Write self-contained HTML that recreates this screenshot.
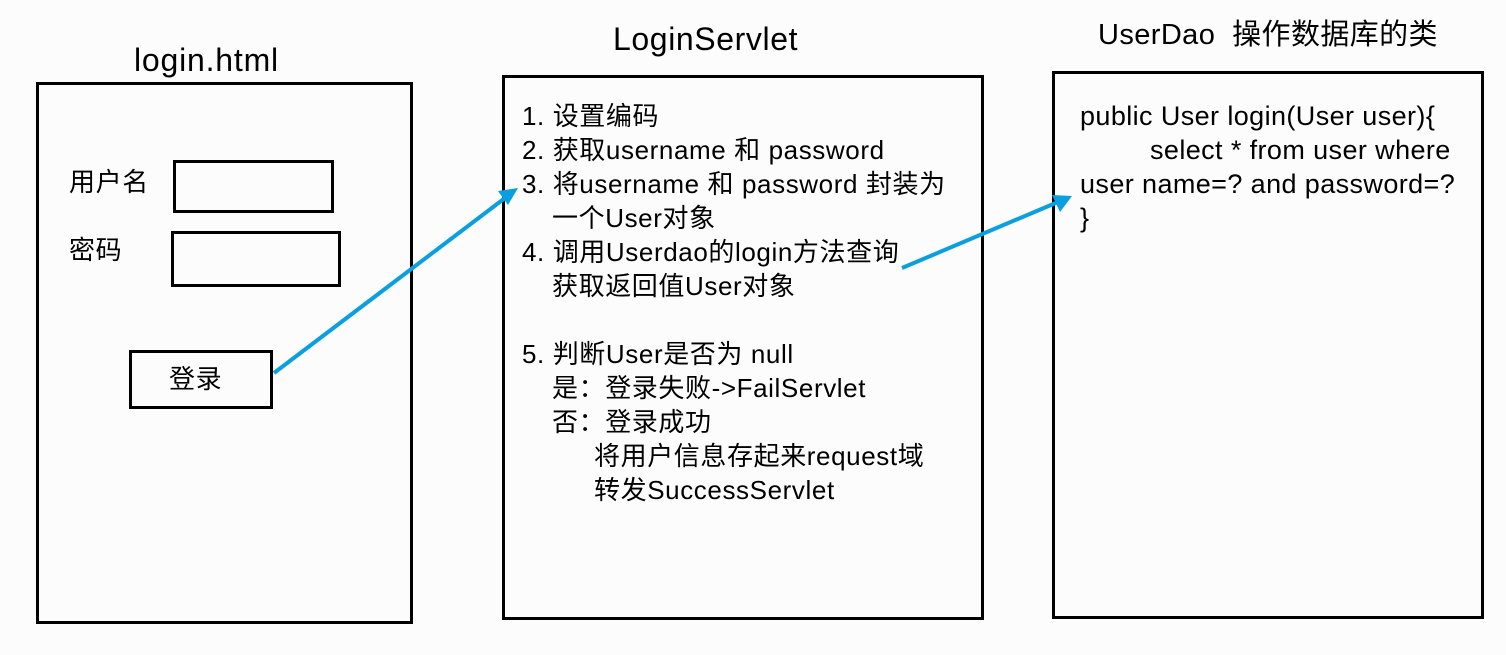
<!DOCTYPE html>
<html><head><meta charset="utf-8"><style>
body{margin:0;width:1506px;height:655px;background:#fcfcfc;position:relative;overflow:hidden;font-family:"Liberation Sans","Noto Sans CJK SC",sans-serif;color:#000}
.b{position:absolute;border:3px solid #000;box-sizing:border-box}
.t{position:absolute;white-space:nowrap;font-size:26px;line-height:34px;letter-spacing:0.6px}
.r{font-size:27px;letter-spacing:0.4px}
</style></head><body>
<div class="t" style="left:134px;top:43px;font-size:32px;letter-spacing:0.8px">login.html</div>
<div class="t" style="left:613px;top:22px;font-size:32px;letter-spacing:0.6px">LoginServlet</div>
<div class="t" style="left:1098px;top:18px;font-size:29px;letter-spacing:0.4px">UserDao&nbsp; 操作数据库的类</div>

<div class="b" style="left:36px;top:82px;width:377px;height:542px"></div>
<div class="b" style="left:502px;top:75px;width:482px;height:545px"></div>
<div class="b" style="left:1052px;top:71px;width:432px;height:548px"></div>

<div class="b" style="left:173px;top:160px;width:161px;height:53px"></div>
<div class="b" style="left:171px;top:231px;width:170px;height:56px"></div>
<div class="b" style="left:129px;top:350px;width:144px;height:59px"></div>
<div class="t" style="left:69px;top:165px">用户名</div>
<div class="t" style="left:69px;top:233px">密码</div>
<div class="t" style="left:169px;top:362px">登录</div>

<div class="t" style="left:522px;top:99px">1. 设置编码</div>
<div class="t" style="left:522px;top:133px">2. 获取username 和 password</div>
<div class="t" style="left:522px;top:167px">3. 将username 和 password 封装为</div>
<div class="t" style="left:552px;top:201px">一个User对象</div>
<div class="t" style="left:522px;top:235px">4. 调用Userdao的login方法查询</div>
<div class="t" style="left:552px;top:269px">获取返回值User对象</div>
<div class="t" style="left:522px;top:337px">5. 判断User是否为 null</div>
<div class="t" style="left:552px;top:371px">是：登录失败-&gt;FailServlet</div>
<div class="t" style="left:552px;top:405px">否：登录成功</div>
<div class="t" style="left:594px;top:439px">将用户信息存起来request域</div>
<div class="t" style="left:594px;top:473px">转发SuccessServlet</div>

<div class="t r" style="left:1080px;top:99px">public User login(User user){</div>
<div class="t r" style="left:1150px;top:133px">select * from user where</div>
<div class="t r" style="left:1080px;top:167px">user name=? and password=?</div>
<div class="t r" style="left:1080px;top:201px">}</div>

<svg width="1506" height="655" style="position:absolute;left:0;top:0">
<g stroke="#0aa0e0" stroke-width="4" fill="#0aa0e0">
<line x1="274" y1="373" x2="505" y2="198"/>
<polygon points="518,188 498,191 508,205" stroke="none"/>
<line x1="902" y1="268" x2="1058" y2="202"/>
<polygon points="1072,196 1052,195 1060,212" stroke="none"/>
</g>
</svg>
</body></html>
